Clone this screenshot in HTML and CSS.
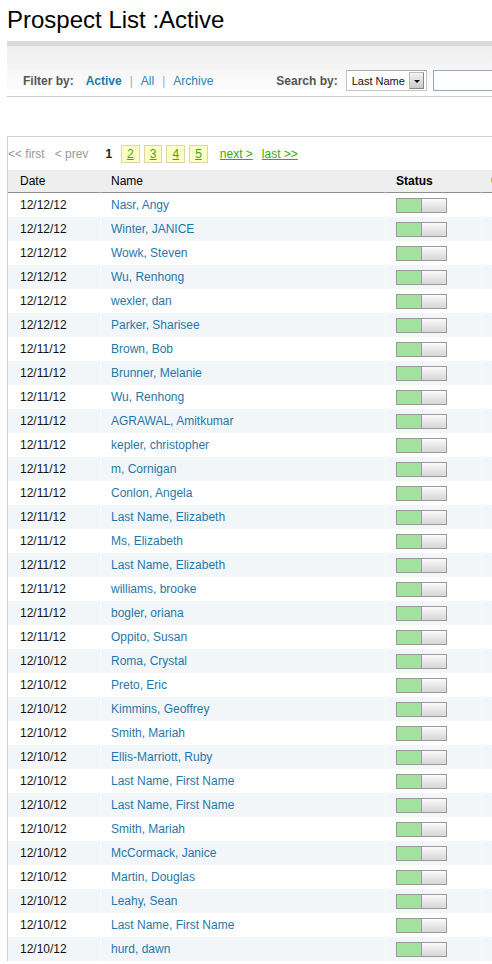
FILE: index.html
```html
<!DOCTYPE html>
<html lang="en">
<head>
  <meta charset="UTF-8" />
  <title>Prospect List :Active</title>
  <link rel="stylesheet" href="styles.css">
</head>
<body>
  <div class="page">
    <h1 class="page-title">Prospect List :Active</h1>

    <div class="filter-bar">
      <span class="label">Filter by:</span>
      <a href="#" class="filter active">Active</a>
      <span class="sep">|</span>
      <a href="#" class="filter">All</a>
      <span class="sep">|</span>
      <a href="#" class="filter">Archive</a>

      <span class="label search-label">Search by:</span>
      <div class="select">
        <span class="select-text">Last Name</span>
        <span class="select-arrow"></span>
      </div>
      <input type="text" class="search-input" />
    </div>

    <div class="list">
      <div class="pager">
        <span class="pg-off">&lt;&lt; first</span>
        <span class="pg-off prev">&lt; prev</span>
        <span class="pg-cur">1</span>
        <a href="#" class="pg-box">2</a>
        <a href="#" class="pg-box">3</a>
        <a href="#" class="pg-box">4</a>
        <a href="#" class="pg-box">5</a>
        <a href="#" class="pg-link next">next &gt;</a>
        <a href="#" class="pg-link last">last &gt;&gt;</a>
      </div>

      <table class="prospects">
        <thead>
          <tr>
            <th class="c-date">Date</th>
            <th class="c-name">Name</th>
            <th class="c-status">Status</th>
            <th class="c-more"><span class="sort-dot"></span></th>
          </tr>
        </thead>
        <tbody>
          <tr><td>12/12/12</td><td><a href="#">Nasr, Angy</a></td><td><span class="toggle"><i></i><b></b></span></td><td></td></tr>
          <tr><td>12/12/12</td><td><a href="#">Winter, JANICE</a></td><td><span class="toggle"><i></i><b></b></span></td><td></td></tr>
          <tr><td>12/12/12</td><td><a href="#">Wowk, Steven</a></td><td><span class="toggle"><i></i><b></b></span></td><td></td></tr>
          <tr><td>12/12/12</td><td><a href="#">Wu, Renhong</a></td><td><span class="toggle"><i></i><b></b></span></td><td></td></tr>
          <tr><td>12/12/12</td><td><a href="#">wexler, dan</a></td><td><span class="toggle"><i></i><b></b></span></td><td></td></tr>
          <tr><td>12/12/12</td><td><a href="#">Parker, Sharisee</a></td><td><span class="toggle"><i></i><b></b></span></td><td></td></tr>
          <tr><td>12/11/12</td><td><a href="#">Brown, Bob</a></td><td><span class="toggle"><i></i><b></b></span></td><td></td></tr>
          <tr><td>12/11/12</td><td><a href="#">Brunner, Melanie</a></td><td><span class="toggle"><i></i><b></b></span></td><td></td></tr>
          <tr><td>12/11/12</td><td><a href="#">Wu, Renhong</a></td><td><span class="toggle"><i></i><b></b></span></td><td></td></tr>
          <tr><td>12/11/12</td><td><a href="#">AGRAWAL, Amitkumar</a></td><td><span class="toggle"><i></i><b></b></span></td><td></td></tr>
          <tr><td>12/11/12</td><td><a href="#">kepler, christopher</a></td><td><span class="toggle"><i></i><b></b></span></td><td></td></tr>
          <tr><td>12/11/12</td><td><a href="#">m, Cornigan</a></td><td><span class="toggle"><i></i><b></b></span></td><td></td></tr>
          <tr><td>12/11/12</td><td><a href="#">Conlon, Angela</a></td><td><span class="toggle"><i></i><b></b></span></td><td></td></tr>
          <tr><td>12/11/12</td><td><a href="#">Last Name, Elizabeth</a></td><td><span class="toggle"><i></i><b></b></span></td><td></td></tr>
          <tr><td>12/11/12</td><td><a href="#">Ms, Elizabeth</a></td><td><span class="toggle"><i></i><b></b></span></td><td></td></tr>
          <tr><td>12/11/12</td><td><a href="#">Last Name, Elizabeth</a></td><td><span class="toggle"><i></i><b></b></span></td><td></td></tr>
          <tr><td>12/11/12</td><td><a href="#">williams, brooke</a></td><td><span class="toggle"><i></i><b></b></span></td><td></td></tr>
          <tr><td>12/11/12</td><td><a href="#">bogler, oriana</a></td><td><span class="toggle"><i></i><b></b></span></td><td></td></tr>
          <tr><td>12/11/12</td><td><a href="#">Oppito, Susan</a></td><td><span class="toggle"><i></i><b></b></span></td><td></td></tr>
          <tr><td>12/10/12</td><td><a href="#">Roma, Crystal</a></td><td><span class="toggle"><i></i><b></b></span></td><td></td></tr>
          <tr><td>12/10/12</td><td><a href="#">Preto, Eric</a></td><td><span class="toggle"><i></i><b></b></span></td><td></td></tr>
          <tr><td>12/10/12</td><td><a href="#">Kimmins, Geoffrey</a></td><td><span class="toggle"><i></i><b></b></span></td><td></td></tr>
          <tr><td>12/10/12</td><td><a href="#">Smith, Mariah</a></td><td><span class="toggle"><i></i><b></b></span></td><td></td></tr>
          <tr><td>12/10/12</td><td><a href="#">Ellis-Marriott, Ruby</a></td><td><span class="toggle"><i></i><b></b></span></td><td></td></tr>
          <tr><td>12/10/12</td><td><a href="#">Last Name, First Name</a></td><td><span class="toggle"><i></i><b></b></span></td><td></td></tr>
          <tr><td>12/10/12</td><td><a href="#">Last Name, First Name</a></td><td><span class="toggle"><i></i><b></b></span></td><td></td></tr>
          <tr><td>12/10/12</td><td><a href="#">Smith, Mariah</a></td><td><span class="toggle"><i></i><b></b></span></td><td></td></tr>
          <tr><td>12/10/12</td><td><a href="#">McCormack, Janice</a></td><td><span class="toggle"><i></i><b></b></span></td><td></td></tr>
          <tr><td>12/10/12</td><td><a href="#">Martin, Douglas</a></td><td><span class="toggle"><i></i><b></b></span></td><td></td></tr>
          <tr><td>12/10/12</td><td><a href="#">Leahy, Sean</a></td><td><span class="toggle"><i></i><b></b></span></td><td></td></tr>
          <tr><td>12/10/12</td><td><a href="#">Last Name, First Name</a></td><td><span class="toggle"><i></i><b></b></span></td><td></td></tr>
          <tr><td>12/10/12</td><td><a href="#">hurd, dawn</a></td><td><span class="toggle"><i></i><b></b></span></td><td></td></tr>
        </tbody>
      </table>
    </div>
  </div>
</body>
</html>
```

FILE: styles.css
```css
* {
  box-sizing: border-box;
}
body {
  margin: 0;
  background: #fff;
  color: #000;
  font-family: "Liberation Sans", Arial, Helvetica, sans-serif;
  font-size: 12px;
}
a {
  text-decoration: none;
}
.page {
  width: 100%;
  overflow: hidden;
}

.page-title {
  margin: 0;
  padding: 6px 0 0 7px;
  font-size: 24px;
  font-weight: normal;
  line-height: 28px;
}

/* filter / search bar */
.filter-bar {
  width: 620px;
  margin: 7px 0 0 7px;
  padding: 24px 0 5px 16px;
  display: flex;
  align-items: baseline;
  white-space: nowrap;
  border-top: 5px solid #dadada;
  border-bottom: 1px solid #cdcdcd;
  background: linear-gradient(#eeeeee, #ffffff);
}
.label {
  font-weight: bold;
  color: #555;
  margin-right: 12px;
}
.filter {
  color: #2584bd;
}
.filter.active {
  font-weight: bold;
  color: #1a7ab3;
}
.sep {
  color: #aaa;
  margin: 0 8px;
}
.search-label {
  margin-left: 63px;
  margin-right: 8px;
}
.select {
  display: inline-flex;
  align-items: center;
  flex: none;
  width: 81px;
  height: 21px;
  padding: 0 2px 0 5px;
  border: 1px solid #c4c4c4;
  border-top-color: #b0b0b0;
  background: #fff;
  color: #111;
  font-size: 11px;
}
.select-text {
  flex: 1;
}
.select-arrow {
  position: relative;
  width: 15px;
  height: 17px;
  border: 1px solid #bbb;
  border-right-color: #888;
  border-bottom-color: #888;
  background: linear-gradient(#f4f4f4, #c9c9c9);
}
.select-arrow::after {
  content: "";
  position: absolute;
  left: 4px;
  top: 7px;
  border-left: 3px solid transparent;
  border-right: 3px solid transparent;
  border-top: 3px solid #111;
}
.search-input {
  flex: none;
  margin-left: 6px;
  width: 120px;
  height: 21px;
  border: 1px solid #98aabd;
  background: #fff;
  font: inherit;
}

/* list */
.list {
  width: 640px;
  margin: 39px 0 0 7px;
  border-top: 1px solid #cfcfcf;
  border-left: 1px solid #cfcfcf;
}
.pager {
  display: flex;
  align-items: center;
  height: 33px;
  padding-top: 1px;
}
.pg-off {
  color: #999;
}
.pg-off.prev {
  margin-left: 10px;
}
.pg-cur {
  font-weight: bold;
  color: #222;
  margin: 0 9px 0 17px;
}
.pg-box {
  display: inline-block;
  height: 18px;
  line-height: 16px;
  padding: 0 5px;
  margin-right: 4px;
  border: 1px solid #d8d8a8;
  background: #ffffc6;
  color: #3da41a;
  text-decoration: underline;
}
.pg-link {
  color: #3da41a;
  text-decoration: underline;
}
.pg-link.next {
  margin-left: 8px;
}
.pg-link.last {
  margin-left: 9px;
}

.prospects {
  border-collapse: separate;
  border-spacing: 0;
  table-layout: fixed;
  width: 632px;
}
.prospects th {
  height: 23px;
  padding: 0 10px;
  text-align: left;
  font-weight: normal;
  background: #eeeeee;
  border-bottom: 1px solid #8e8e8e;
  border-left: 1px solid #eeeeee;
}
.prospects th.c-date {
  width: 92px;
  padding-left: 12px;
  border-left: 0;
}
.prospects th.c-name {
  width: 285px;
}
.prospects th.c-status {
  width: 96px;
  font-weight: bold;
}
.sort-dot {
  display: inline-block;
  width: 4px;
  height: 6px;
  margin-left: -1px;
  border-radius: 2px;
  background: #e0a850;
  vertical-align: 2px;
}
.prospects td {
  height: 24px;
  padding: 0 10px;
  border-left: 1px solid #fff;
  color: #111;
}
.prospects td:first-child {
  padding-left: 12px;
  border-left: 0;
}
.prospects tbody tr:nth-child(even) td {
  background: #f2f6f9;
}
.prospects td a {
  color: #1f78ab;
}

.toggle {
  display: flex;
  width: 51px;
  height: 15px;
  border: 1px solid #9a9a9a;
}
.toggle i {
  width: 24px;
  background: #a5e2a0;
}
.toggle b {
  flex: 1;
  border-left: 1px solid #9a9a9a;
  background: linear-gradient(#fbfbfb, #d6d6d6);
}
```
